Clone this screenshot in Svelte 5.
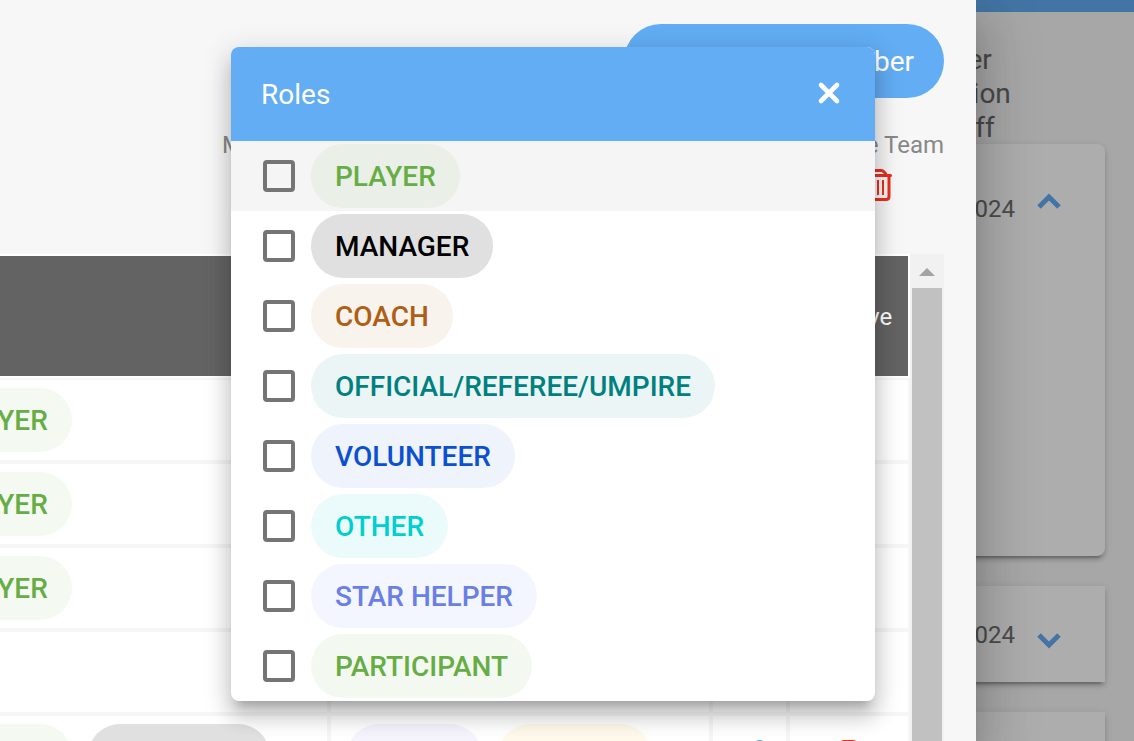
<script lang="ts">
	type Tag = { label: string; color: string; background: string };

	const player = { label: 'PLAYER', color: '#67ad45', background: 'rgba(103, 173, 69, 0.07)' };
	const manager = { label: 'MANAGER', color: '#000000', background: '#e0e0e0' };

	const roles: Tag[] = [
		player,
		manager,
		{ label: 'COACH', color: '#ae5f14', background: '#f9f3ed' },
		{ label: 'OFFICIAL/REFEREE/UMPIRE', color: '#008080', background: '#ebf5f5' },
		{ label: 'VOLUNTEER', color: '#0b50d0', background: '#eef3fc' },
		{ label: 'OTHER', color: '#00cfcf', background: '#ebfbfb' },
		{ label: 'STAR HELPER', color: '#697fe6', background: '#f3f6fe' },
		{ label: 'PARTICIPANT', color: '#67ad45', background: '#f3f9f1' }
	];

	const members: { roles: Tag[]; groups: Tag[]; actions: boolean }[] = [
		{ roles: [player], groups: [], actions: false },
		{ roles: [player], groups: [], actions: false },
		{ roles: [player], groups: [], actions: false },
		{ roles: [], groups: [], actions: false },
		{
			roles: [player, manager],
			groups: [
				{ label: 'GUEST', color: '#6a4bc0', background: '#f5f3fb' },
				{ label: 'SCORER', color: '#e0a800', background: '#fef9ea' }
			],
			actions: true
		}
	];

	let open = $state(true);
	let checked = $state(roles.map(() => false));
</script>

{#snippet pill(tag: Tag)}
	<span class="pill" style:color={tag.color} style:background={tag.background}>{tag.label}</span>
{/snippet}

{#snippet trash()}
	<svg class="icon" viewBox="0 0 32 32" fill="none" stroke="#e8301f" aria-hidden="true">
		<path d="M1.5 6.5h28" stroke-width="3" stroke-linecap="round" />
		<path d="M5.5 6.5C7 3.5 8.500 1.500 11 1.500h9C22.500 1.500 24 3.500 25.500 6.500" stroke-width="3" />
		<path d="M3 7v20.500q0 3 3 3h19q3 0 3-3V7" stroke-width="3" />
		<path d="M7 11v15M12 11v15M17 11v15M22 11v15" stroke-width="2" />
	</svg>
{/snippet}

<div class="app">
	<main class="page">
		<div class="topbar"></div>
		<div class="page__head">
			<p class="page__lead">The Player<br />Registration<br />Age Cutoff</p>
		</div>
		<section class="card card--open">
			<div class="card__head card__head--tall">
				<span>12/31/2024</span>
				<svg class="chevron" viewBox="0 0 24 36" aria-hidden="true"><path d="M2 22 12 12 22 22" /></svg>
			</div>
		</section>
		<section class="card">
			<div class="card__head">
				<span>12/31/2024</span>
				<svg class="chevron" viewBox="0 0 24 36" aria-hidden="true"><path d="M2 18 12 28 22 18" /></svg>
			</div>
		</section>
		<section class="card">
			<div class="card__head"></div>
		</section>
	</main>
	<div class="scrim"></div>

	<aside class="drawer">
		<button type="button" class="add">Add Season Member</button>
		<div class="tools">
			<button type="button" class="tool">Message</button>
			<button type="button" class="tool">Delete Team {@render trash()}</button>
		</div>

		<div class="roster">
			<div class="roster__view">
				<table>
					<colgroup>
						<col />
						<col class="col-groups" />
						<col class="col-edit" />
						<col class="col-remove" />
					</colgroup>
					<thead>
						<tr><th></th><th>Groups</th><th>Edit</th><th>Remove</th></tr>
					</thead>
					<tbody>
						{#each members as member}
							<tr>
								<td><div class="pills">{#each member.roles as tag}{@render pill(tag)}{/each}</div></td>
								<td><div class="pills">{#each member.groups as tag}{@render pill(tag)}{/each}</div></td>
								<td class="action">
									{#if member.actions}
										<svg class="icon" viewBox="0 0 32 32" fill="none" stroke="#62adf4" stroke-width="3" aria-hidden="true">
											<path d="M3 29l2-8L22 3q3.500-3 7 0 3 3 0 7L11 27z" />
										</svg>
									{/if}
								</td>
								<td class="action">{#if member.actions}{@render trash()}{/if}</td>
							</tr>
						{/each}
					</tbody>
				</table>
			</div>
			<div class="scrollbar" aria-hidden="true">
				<svg class="scrollbar__up" viewBox="0 0 34 34"><path d="M9 22h16l-8-8z" fill="#a3a3a3" /></svg>
				<div class="scrollbar__thumb"></div>
			</div>
		</div>
	</aside>

	{#if open}
		<div class="dialog" role="dialog" aria-labelledby="roles-title">
			<header class="dialog__head">
				<h2 id="roles-title">Roles</h2>
				<button type="button" class="close" aria-label="Close" onclick={() => (open = false)}>
					<svg class="icon" viewBox="0 0 32 32" aria-hidden="true">
						<path d="M8 7l16 16M24 7L8 23" stroke="#fff" stroke-width="4.600" stroke-linecap="round" />
					</svg>
				</button>
			</header>
			{#each roles as role, i}
				<label class="option" class:option--active={i === 0}>
					<input type="checkbox" bind:checked={checked[i]} />
					{@render pill(role)}
				</label>
			{/each}
		</div>
	{/if}
</div>

<style>
	:global(body) {
		margin: 0;
	}

	.app {
		position: relative;
		height: 100vh;
		overflow: hidden;
		background: #f7f7f7;
		font-family: Roboto, 'Liberation Sans', sans-serif;
	}

	button {
		border: 0;
		padding: 0;
		background: none;
		font: inherit;
		cursor: pointer;
	}

	.icon {
		display: block;
		width: 32px;
		height: 32px;
	}

	/* page behind the drawer */
	.topbar {
		height: 12px;
		background: #62adf4;
	}

	.page__head {
		display: flex;
		justify-content: flex-end;
		height: 132px;
	}

	.page__lead {
		width: 273px;
		margin: 0;
		padding-top: 31px;
		font-size: 28px;
		line-height: 34px;
		color: #6b6b6b;
	}

	.card {
		margin: 0 29px 30px;
		background: #fff;
		box-shadow:
			0 6px 2px -4px rgba(0, 0, 0, 0.2),
			0 4px 4px 0 rgba(0, 0, 0, 0.14),
			0 2px 10px 0 rgba(0, 0, 0, 0.12);
	}

	.card--open {
		height: 412px;
		border-radius: 8px;
	}

	.card__head {
		display: flex;
		align-items: center;
		justify-content: flex-end;
		gap: 22px;
		box-sizing: border-box;
		height: 96px;
		padding: 2px 44px 0 0;
		font-size: 24px;
		color: #707070;
	}

	.card__head--tall {
		height: 128px;
	}

	.chevron {
		width: 24px;
		height: 36px;
		fill: none;
		stroke: #62adf4;
		stroke-width: 5;
	}

	.card--open .chevron {
		margin-bottom: 12px;
	}

	.scrim {
		position: absolute;
		inset: 0;
		background: rgba(0, 0, 0, 0.32);
	}

	/* drawer */
	.drawer {
		position: absolute;
		inset: 0 158px 0 0;
		display: flex;
		flex-direction: column;
		box-sizing: border-box;
		padding: 24px 32px 0 0;
		background: #f7f7f7;
		box-shadow:
			0 16px 20px -10px rgba(0, 0, 0, 0.2),
			0 32px 48px 4px rgba(0, 0, 0, 0.14),
			0 12px 60px 10px rgba(0, 0, 0, 0.12);
	}

	.add {
		align-self: flex-end;
		height: 74px;
		padding: 0 30px;
		border-radius: 37px;
		background: #62adf4;
		color: #fff;
		font-size: 28px;
		white-space: nowrap;
	}

	.tools {
		display: flex;
		align-items: flex-start;
		justify-content: space-between;
		padding: 33px 0 53px 222px;
	}

	.tool {
		display: flex;
		flex-direction: column;
		align-items: center;
		gap: 10px;
		font-size: 24px;
		line-height: 28px;
		color: #888;
	}

	.roster {
		display: flex;
		flex: 1;
		min-height: 0;
	}

	.roster__view {
		display: flex;
		flex: 1;
		justify-content: flex-end;
		align-items: flex-start;
		min-width: 0;
		overflow: hidden;
		background: #fff;
	}

	table {
		flex-shrink: 0;
		width: calc(100% + 95px);
		table-layout: fixed;
		border-spacing: 0;
	}

	.col-groups {
		width: 382px;
	}

	.col-edit {
		width: 77px;
	}

	.col-remove {
		width: 122px;
	}

	th {
		box-sizing: border-box;
		height: 124px;
		padding: 2px 16px 0;
		border: 2px solid #fff;
		background: #636363;
		background-clip: padding-box;
		color: #fff;
		font-size: 24px;
		font-weight: 400;
	}

	td {
		box-sizing: border-box;
		height: 84px;
		padding: 0 16px;
		border: 2px solid #f6f6f6;
	}

	.action {
		padding: 0 20px;
	}

	.action .icon {
		margin: 0 auto;
	}

	.pills {
		display: flex;
		gap: 16px;
	}

	.pill {
		padding: 2px 24px 0;
		border-radius: 32px;
		font-size: 28px;
		font-weight: 500;
		line-height: 62px;
		white-space: nowrap;
	}

	.scrollbar {
		display: flex;
		flex-direction: column;
		width: 34px;
		background: #f1f1f1;
	}

	.scrollbar__up {
		height: 34px;
	}

	.scrollbar__thumb {
		flex: 1;
		margin: 0 2px;
		background: #c1c1c1;
	}

	/* roles popup */
	.dialog {
		position: absolute;
		top: 47px;
		left: 231px;
		width: 644px;
		overflow: hidden;
		border-radius: 8px;
		background: #fff;
		box-shadow:
			0 10px 10px -6px rgba(0, 0, 0, 0.2),
			0 16px 20px 2px rgba(0, 0, 0, 0.14),
			0 6px 28px 4px rgba(0, 0, 0, 0.12);
	}

	.dialog__head {
		display: flex;
		align-items: center;
		justify-content: space-between;
		height: 94px;
		padding: 0 30px;
		background: #62adf4;
		color: #fff;
	}

	h2 {
		margin: 0;
		font-size: 28px;
		font-weight: 400;
	}

	.option {
		display: flex;
		align-items: center;
		gap: 16px;
		height: 70px;
		padding: 0 32px;
	}

	.option--active {
		background: #f5f5f5;
	}

	input {
		appearance: none;
		box-sizing: border-box;
		width: 32px;
		height: 32px;
		margin: 0;
		border: 4px solid #757575;
		border-radius: 4px;
	}

	input:checked {
		background: #757575;
	}
</style>
